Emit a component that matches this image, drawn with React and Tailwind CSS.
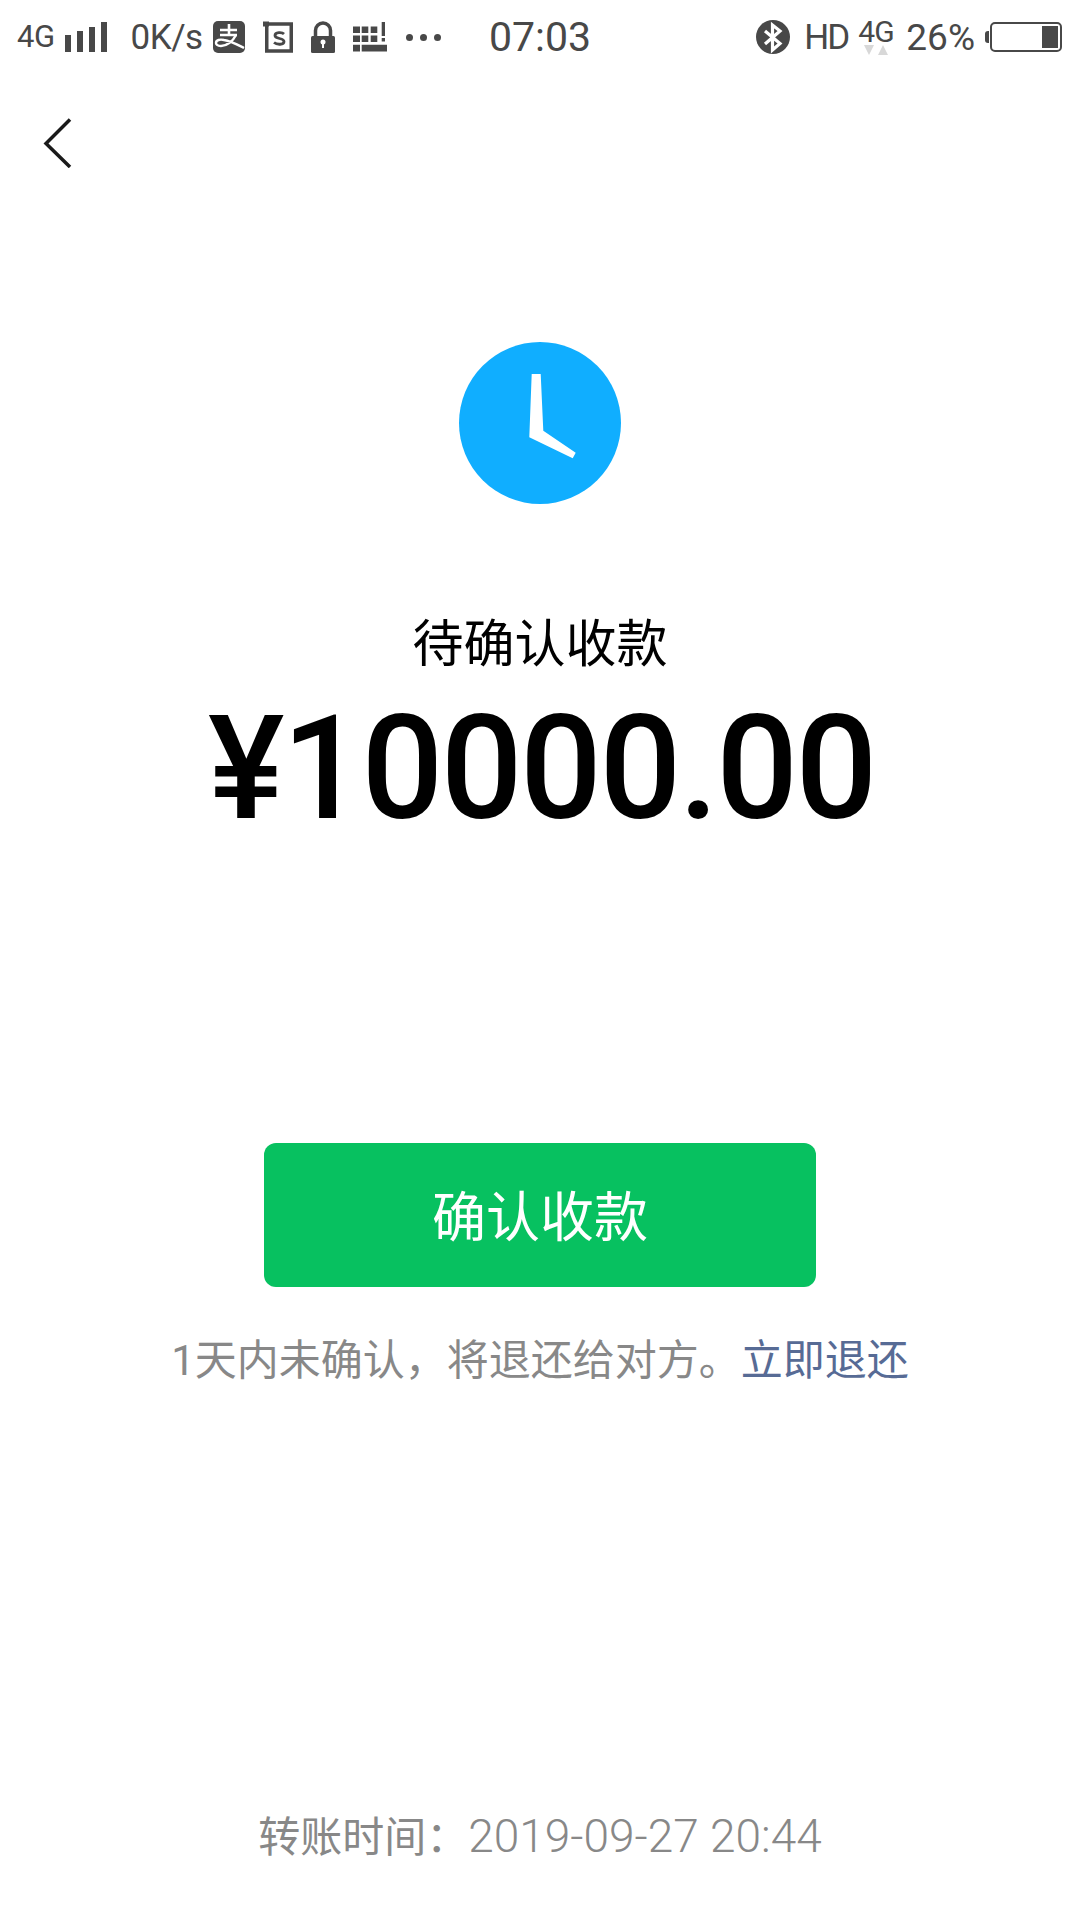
const cjk = "font-['Roboto','Noto_Sans_CJK_SC',sans-serif]";

function SignalBars() {
  return (
    <svg width="42" height="32" viewBox="0 0 42 32" className="ml-[10px]">
      <path d="M0 14h6v17H0zM12 10h6v21h-6zM24 6h6v25h-6zM36 1h6v30h-6z" fill="#484848" />
    </svg>
  );
}

function AlipayIcon() {
  return (
    <svg width="32" height="32" viewBox="0 0 32 32">
      <rect x="0" y="0" width="32" height="32" rx="5" fill="#484848" />
      <path d="M7 9h17M16 3v11M7 14h17" stroke="#fff" strokeWidth="2.600" fill="none" />
      <path d="M23 14c-3 6-9 11-15 11-4 0-5-2-5-3 0-3 4-4 8-3 7 1 14 5 20 8" stroke="#fff" strokeWidth="2.400" fill="none" />
    </svg>
  );
}

function ShopIcon() {
  return (
    <svg width="30" height="32" viewBox="0 0 30 32">
      <path d="M3.750 3h24.500v27H3.750z" stroke="#484848" strokeWidth="3.500" fill="none" />
      <path d="M0 0.500h6v5H0z" fill="#484848" />
      <path d="M21 13c-2-2-9-2-9 1.500 0 4 9 2 9 6 0 3.500-7 3.500-10 1" stroke="#484848" strokeWidth="2.800" fill="none" />
    </svg>
  );
}

function LockIcon() {
  return (
    <svg width="24" height="32" viewBox="0 0 24 32">
      <path d="M4.500 16V9.500a7.500 7.500 0 0 1 15 0V16" stroke="#484848" strokeWidth="3.500" fill="none" />
      <rect x="0" y="15" width="24" height="17" rx="1.500" fill="#484848" />
      <circle cx="12" cy="21" r="2.500" fill="#fff" />
      <path d="M11 21h2v6h-2z" fill="#fff" />
    </svg>
  );
}

function KeyboardIcon() {
  return (
    <svg width="34" height="30" viewBox="0 0 34 30">
      <path
        d="M0 4.500h7v6.500H0zM8.700 4.500h6.600v6.500H8.700zM17.700 4.500h6.600v6.500h-6.600zM0 13.500h7v6.500H0zM8.700 13.500h6.600v6.500H8.700zM17.700 13.500h6.600v6.500h-6.600zM28.700 0H32v14h-3.300zM28.700 16H32v3.500h-3.300zM0 22.700h7v6.800H0zM8.700 22.700H34v6.800H8.700z"
        fill="#484848"
      />
    </svg>
  );
}

function BluetoothIcon() {
  return (
    <svg width="34" height="34" viewBox="0 0 34 34">
      <circle cx="17" cy="17" r="17" fill="#484848" />
      <path d="M9 11l15 12.500-7.500 6.500V5L24 11 9 24" stroke="#fff" strokeWidth="3.200" fill="none" />
    </svg>
  );
}

function StatusBar() {
  return (
    <div className="flex h-[72px] items-center pl-[17px] pr-[18px] pt-[2px] text-[#484848]">
      <div className="flex w-[472px] items-center">
        <span className="text-[31px] tracking-[-0.5px]">4G</span>
        <SignalBars />
        <span className="ml-[24px] mt-[2px] text-[35px] tracking-[-0.5px]">0K/s</span>
        <div className="ml-[10px] flex items-center gap-[18px]">
          <AlipayIcon />
          <ShopIcon />
          <LockIcon />
          <KeyboardIcon />
          <div className="ml-[1px] flex gap-[7px]">
            <span className="size-[7px] rounded-full bg-[#484848]" />
            <span className="size-[7px] rounded-full bg-[#484848]" />
            <span className="size-[7px] rounded-full bg-[#484848]" />
          </div>
        </div>
      </div>
      <span className="mt-[2px] text-[41px]">07:03</span>
      <div className="ml-auto flex items-center">
        <BluetoothIcon />
        <span className="ml-[14px] mt-[2px] text-[35px] tracking-[-2px]">HD</span>
        <div className="relative ml-[10px] w-[36px] text-[30px] tracking-[-1px]">
          <span className="relative top-[-6px]">4G</span>
          <svg width="24" height="11" viewBox="0 0 24 11" className="absolute left-[6px] top-[30px]">
            <path d="M0 0h10L5 10zM14 10h10L19 0z" fill="#d8d8d8" />
          </svg>
        </div>
        <span className="ml-[12px] mt-[2px] text-[37px] tracking-[0px]">26%</span>
        <div className="ml-[10px] h-[12px] w-[4px] rounded-l-[3px] bg-[#484848]" />
        <div className="ml-[1px] flex h-[30px] w-[72px] justify-end rounded-[5px] border-2 border-[#484848] p-[2px]">
          <div className="w-[16px] bg-[#484848]" />
        </div>
      </div>
    </div>
  );
}

export default function App() {
  return (
    <div className={`flex h-[1920px] w-[1080px] flex-col bg-white ${cjk}`}>
      <StatusBar />

      <div className="pl-[43px] pt-[46px]">
        <svg width="30" height="50" viewBox="0 0 30 50" className="block">
          <path d="M27 1.500L3 25.500 27 49" stroke="#1a1a1a" strokeWidth="3.500" fill="none" />
        </svg>
      </div>

      <div className="flex flex-col items-center">
        <div className="mt-[174px] size-[162px] rounded-full bg-[#10aeff]">
          <svg width="162" height="162" viewBox="0 0 162 162">
            <path d="M72.700 32h9l2.600 56.700 32.400 22-3 5.600-43.400-21z" fill="#fff" />
          </svg>
        </div>

        <h1 className="mt-[106px] text-[51px] leading-[70px] font-normal text-black">待确认收款</h1>
        <p className="mt-[9px] pl-[3px] text-[144px] leading-[160px] font-medium tracking-[-2.500px] text-black">¥10000.00</p>

        <button className="mt-[294px] flex h-[144px] w-[552px] items-center justify-center rounded-[12px] bg-[#07c160] pt-[6px] text-[54px] text-white">
          确认收款
        </button>

        <p className="mt-[49px] text-[42px] leading-[50px] text-[#888888]">
          1天内未确认，将退还给对方。<span className="text-[#576b95]">立即退还</span>
        </p>
      </div>

      <p className="mt-auto pb-[57px] text-center text-[42px] leading-[50px] text-[#888888]">
        转账时间：<span className="text-[46px] font-light">2019-09-27 20:44</span>
      </p>
    </div>
  );
}
